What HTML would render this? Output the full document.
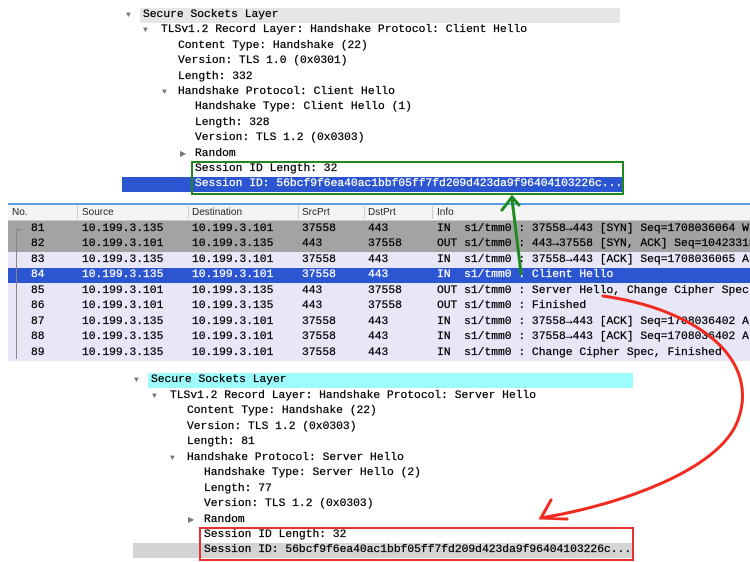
<!DOCTYPE html>
<html><head><meta charset="utf-8">
<style>
html,body{margin:0;padding:0;background:#fff;width:750px;height:562px;overflow:hidden;position:relative;font-family:"Liberation Mono",monospace;font-size:11.3px;color:#000;-webkit-text-stroke:0.25px}
.t{position:absolute;white-space:pre;line-height:15px;height:15px}
.tri{position:absolute;font-size:8px;color:#777;line-height:15px;-webkit-text-stroke:0}
.s{font-family:"Liberation Sans",sans-serif;font-size:10px;color:#222;-webkit-text-stroke:0}
.row{position:absolute;left:8px;width:742px;height:15.5px}
.c{position:absolute;white-space:pre;line-height:15.5px}
</style></head><body>

<div style="position:absolute;left:140px;top:8px;width:480px;height:15px;background:#e6e6e6"></div>
<div class="tri" style="left:126px;top:8px">▼</div><div class="t" style="left:143px;top:8px">Secure Sockets Layer</div>
<div class="tri" style="left:143px;top:23px">▼</div><div class="t" style="left:161px;top:23px">TLSv1.2 Record Layer: Handshake Protocol: Client Hello</div>
<div class="t" style="left:178px;top:39px">Content Type: Handshake (22)</div>
<div class="t" style="left:178px;top:54px">Version: TLS 1.0 (0x0301)</div>
<div class="t" style="left:178px;top:70px">Length: 332</div>
<div class="tri" style="left:162px;top:85px">▼</div><div class="t" style="left:178px;top:85px">Handshake Protocol: Client Hello</div>
<div class="t" style="left:195px;top:100px">Handshake Type: Client Hello (1)</div>
<div class="t" style="left:195px;top:116px">Length: 328</div>
<div class="t" style="left:195px;top:131px">Version: TLS 1.2 (0x0303)</div>
<div class="tri" style="left:180px;top:147px">▶</div><div class="t" style="left:195px;top:147px">Random</div>
<div class="t" style="left:195px;top:162px">Session ID Length: 32</div>
<div style="position:absolute;left:122px;top:177px;width:500px;height:15px;background:#2c55d2"></div>
<div class="t" style="left:195px;top:177px;color:#fff">Session ID: 56bcf9f6ea40ac1bbf05ff7fd209d423da9f96404103226c...</div>
<div style="position:absolute;left:191px;top:161px;width:429px;height:30px;border:2px solid #1e8a1e"></div>

<div style="position:absolute;left:8px;top:203px;width:742px;height:2px;background:#5b9be0"></div>
<div style="position:absolute;left:8px;top:205px;width:742px;height:15px;background:#f4f4f4;border-bottom:1px solid #ccc"></div>
<div class="c s" style="left:12px;top:205px;line-height:15px">No.</div>
<div class="c s" style="left:82px;top:205px;line-height:15px">Source</div>
<div class="c s" style="left:192px;top:205px;line-height:15px">Destination</div>
<div class="c s" style="left:302px;top:205px;line-height:15px">SrcPrt</div>
<div class="c s" style="left:368px;top:205px;line-height:15px">DstPrt</div>
<div class="c s" style="left:437px;top:205px;line-height:15px">Info</div>
<div style="position:absolute;left:77px;top:206px;width:1px;height:13px;background:#ccc"></div>
<div style="position:absolute;left:188px;top:206px;width:1px;height:13px;background:#ccc"></div>
<div style="position:absolute;left:298px;top:206px;width:1px;height:13px;background:#ccc"></div>
<div style="position:absolute;left:364px;top:206px;width:1px;height:13px;background:#ccc"></div>
<div style="position:absolute;left:432px;top:206px;width:1px;height:13px;background:#ccc"></div>

<div class="row" style="top:221px;background:#a3a3a3"></div>
<div class="row" style="top:236.5px;background:#a3a3a3"></div>
<div class="row" style="top:252px;background:#e7e7f7"></div>
<div class="row" style="top:267.5px;background:#2c55d2"></div>
<div class="row" style="top:283px;background:#e7e7f7"></div>
<div class="row" style="top:298.5px;background:#e7e7f7"></div>
<div class="row" style="top:314px;background:#e7e7f7"></div>
<div class="row" style="top:329.5px;background:#e7e7f7"></div>
<div class="row" style="top:345px;background:#e7e7f7"></div>
<div style="position:absolute;left:16px;top:229px;width:1px;height:130px;background:#888"></div>
<div style="position:absolute;left:16px;top:229px;width:6px;height:1px;background:#888"></div>

<div style="position:absolute;left:0;top:221.5px">
<div class="c" style="left:31px;top:0">81</div><div class="c" style="left:82px;top:0">10.199.3.135</div><div class="c" style="left:192px;top:0">10.199.3.101</div><div class="c" style="left:302px;top:0">37558</div><div class="c" style="left:368px;top:0">443</div><div class="c" style="left:437px;top:0">IN  s1/tmm0 : 37558→443 [SYN] Seq=1708036064 W</div>
<div class="c" style="left:31px;top:15.5px">82</div><div class="c" style="left:82px;top:15.5px">10.199.3.101</div><div class="c" style="left:192px;top:15.5px">10.199.3.135</div><div class="c" style="left:302px;top:15.5px">443</div><div class="c" style="left:368px;top:15.5px">37558</div><div class="c" style="left:437px;top:15.5px">OUT s1/tmm0 : 443→37558 [SYN, ACK] Seq=10423318</div>
<div class="c" style="left:31px;top:31px">83</div><div class="c" style="left:82px;top:31px">10.199.3.135</div><div class="c" style="left:192px;top:31px">10.199.3.101</div><div class="c" style="left:302px;top:31px">37558</div><div class="c" style="left:368px;top:31px">443</div><div class="c" style="left:437px;top:31px">IN  s1/tmm0 : 37558→443 [ACK] Seq=1708036065 A</div>
<div style="color:#fff"><div class="c" style="left:31px;top:46.5px">84</div><div class="c" style="left:82px;top:46.5px">10.199.3.135</div><div class="c" style="left:192px;top:46.5px">10.199.3.101</div><div class="c" style="left:302px;top:46.5px">37558</div><div class="c" style="left:368px;top:46.5px">443</div><div class="c" style="left:437px;top:46.5px">IN  s1/tmm0 : Client Hello</div></div>
<div class="c" style="left:31px;top:62px">85</div><div class="c" style="left:82px;top:62px">10.199.3.101</div><div class="c" style="left:192px;top:62px">10.199.3.135</div><div class="c" style="left:302px;top:62px">443</div><div class="c" style="left:368px;top:62px">37558</div><div class="c" style="left:437px;top:62px">OUT s1/tmm0 : Server Hello, Change Cipher Spec</div>
<div class="c" style="left:31px;top:77.5px">86</div><div class="c" style="left:82px;top:77.5px">10.199.3.101</div><div class="c" style="left:192px;top:77.5px">10.199.3.135</div><div class="c" style="left:302px;top:77.5px">443</div><div class="c" style="left:368px;top:77.5px">37558</div><div class="c" style="left:437px;top:77.5px">OUT s1/tmm0 : Finished</div>
<div class="c" style="left:31px;top:93px">87</div><div class="c" style="left:82px;top:93px">10.199.3.135</div><div class="c" style="left:192px;top:93px">10.199.3.101</div><div class="c" style="left:302px;top:93px">37558</div><div class="c" style="left:368px;top:93px">443</div><div class="c" style="left:437px;top:93px">IN  s1/tmm0 : 37558→443 [ACK] Seq=1708036402 A</div>
<div class="c" style="left:31px;top:108.5px">88</div><div class="c" style="left:82px;top:108.5px">10.199.3.135</div><div class="c" style="left:192px;top:108.5px">10.199.3.101</div><div class="c" style="left:302px;top:108.5px">37558</div><div class="c" style="left:368px;top:108.5px">443</div><div class="c" style="left:437px;top:108.5px">IN  s1/tmm0 : 37558→443 [ACK] Seq=1708036402 A</div>
<div class="c" style="left:31px;top:124px">89</div><div class="c" style="left:82px;top:124px">10.199.3.135</div><div class="c" style="left:192px;top:124px">10.199.3.101</div><div class="c" style="left:302px;top:124px">37558</div><div class="c" style="left:368px;top:124px">443</div><div class="c" style="left:437px;top:124px">IN  s1/tmm0 : Change Cipher Spec, Finished</div>
</div>

<div style="position:absolute;left:148px;top:373px;width:485px;height:15px;background:#9ffcfc"></div>
<div class="tri" style="left:134px;top:373px">▼</div><div class="t" style="left:151px;top:373px">Secure Sockets Layer</div>
<div class="tri" style="left:152px;top:389px">▼</div><div class="t" style="left:170px;top:389px">TLSv1.2 Record Layer: Handshake Protocol: Server Hello</div>
<div class="t" style="left:187px;top:404px">Content Type: Handshake (22)</div>
<div class="t" style="left:187px;top:420px">Version: TLS 1.2 (0x0303)</div>
<div class="t" style="left:187px;top:435px">Length: 81</div>
<div class="tri" style="left:170px;top:451px">▼</div><div class="t" style="left:187px;top:451px">Handshake Protocol: Server Hello</div>
<div class="t" style="left:204px;top:466px">Handshake Type: Server Hello (2)</div>
<div class="t" style="left:204px;top:482px">Length: 77</div>
<div class="t" style="left:204px;top:497px">Version: TLS 1.2 (0x0303)</div>
<div class="tri" style="left:188px;top:513px">▶</div><div class="t" style="left:204px;top:513px">Random</div>
<div class="t" style="left:204px;top:528px">Session ID Length: 32</div>
<div style="position:absolute;left:133px;top:543px;width:499px;height:15px;background:#d4d4d4"></div>
<div class="t" style="left:204px;top:543px">Session ID: 56bcf9f6ea40ac1bbf05ff7fd209d423da9f96404103226c...</div>
<div style="position:absolute;left:199px;top:527px;width:431px;height:30px;border:2px solid #e83030"></div>

<svg style="position:absolute;left:0;top:0" width="750" height="562">
<g fill="none" stroke-width="3" stroke-linecap="round">
<path d="M521 273 L512 199 M502 210 L512 197 L519 205" stroke="#1e8a1e"/>
<path d="M603 296 C700 310 760 360 738 420 C720 470 620 505 541 518 M551 500 L541 518 L567 519" stroke="#f02a1e"/>
</g>
</svg>
</body></html>
